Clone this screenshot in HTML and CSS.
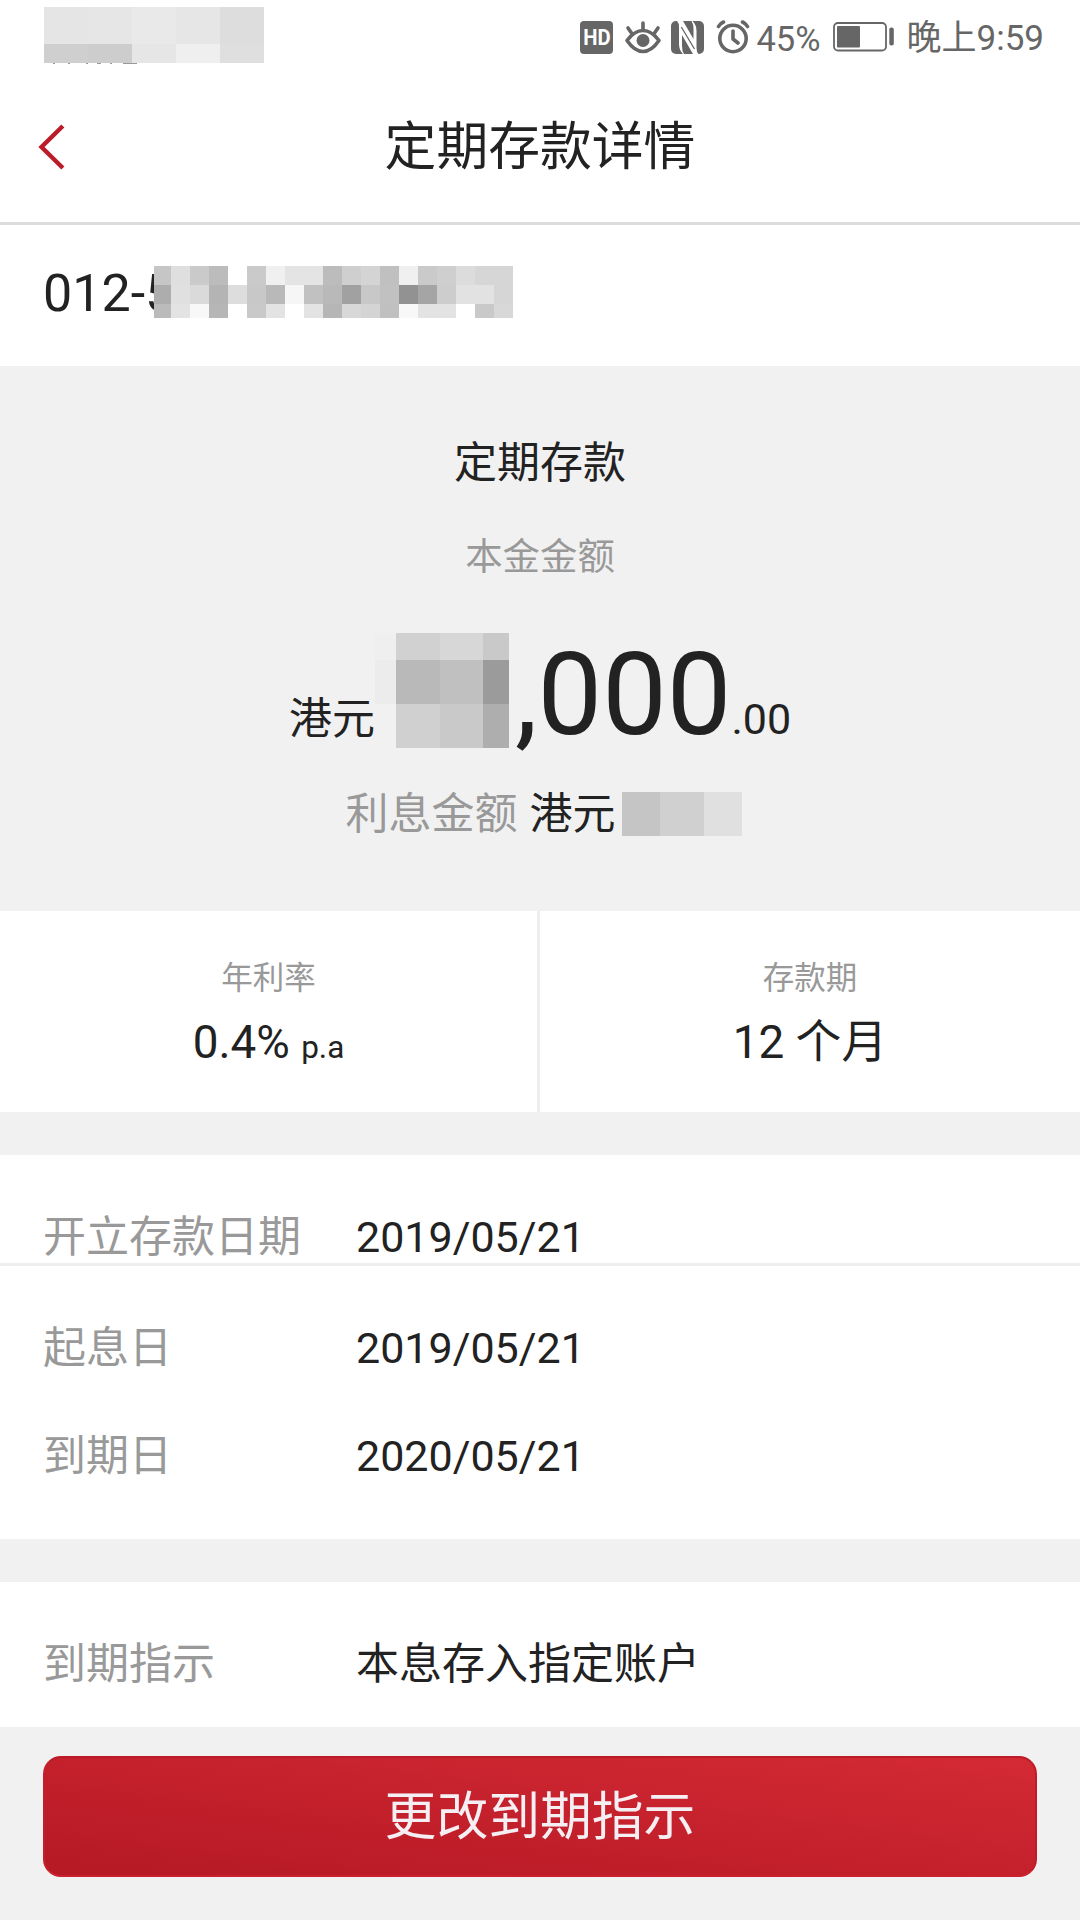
FILE: index.html
```html
<!DOCTYPE html>
<html lang="zh-CN">
<head>
<meta charset="utf-8">
<title>定期存款详情</title>
<link rel="stylesheet" href="styles.css">
</head>
<body>
<header class="header">
  <div class="status">
    <svg class="carrier" width="220" height="58" shape-rendering="crispEdges">
      <path fill="#e5e5e5" d="M0 0h44v37H0z"/><path fill="#e6e6e6" d="M44 0h44v37H44zM132 0h44v37h-44z"/><path fill="#e9e9e9" d="M88 0h44v37H88z"/><path fill="#ddd" d="M176 0h44v37h-44z"/>
      <path fill="#cfcfcf" d="M0 37h44v19H0z"/><path fill="#cdcdcd" d="M44 37h44v19H44z"/><path fill="#e6e6e6" d="M88 37h44v19H88z"/><path fill="#efefef" d="M132 37h44v19h-44z"/><path fill="#dfdfdf" d="M176 37h44v19h-44z"/>
      <path fill="#999" d="M9 56h2v1H9zM24 56h2v1h-2zM42 56h2v1h-2zM53 56h4v1h-4zM66 56h2v1h-2zM79 56h14v1H79z"/>
    </svg>
    <div class="tray">
      <span class="hd"><span class="hd-text">HD</span></span>
      <svg class="eye" width="38" height="36" viewBox="0 0 38 36" fill="none" stroke="#666" stroke-width="3.6" stroke-linecap="round">
        <path d="M3 21.500Q10.500 11.500 19 11.500T35 21.500Q27.500 32.500 19 32.500T3 21.500Z" stroke-linejoin="round"/>
        <circle cx="19" cy="21.500" r="6.500" fill="#666" stroke="none"/>
        <path d="M19 4v6M4 9l3.500 5M34 9l-3.500 5"/>
      </svg>
      <svg class="nfc" width="33" height="33" viewBox="0 0 33 33">
        <rect width="33" height="33" rx="5" fill="#666"/>
        <path d="M12 33Q8 29 8 23V6Q8 2 6 0H12L22.500 18V8Q22.500 3 20.500 0H21.500Q25.500 4 25.500 10V27Q25.500 31 27.500 33H22L11 14V25Q11 30 13 33Z" fill="#fff"/>
        <path d="M10.300 6L23.500 28" fill="none" stroke="#666" stroke-width="1.300"/>
      </svg>
      <svg class="alarm" width="34" height="34" viewBox="0 0 34 34" fill="none" stroke="#666" stroke-width="3.600" stroke-linecap="round">
        <circle cx="17" cy="18.500" r="13.200"/>
        <path d="M17 11v8l5 4M2.500 6.500Q4 3.500 7.500 2M26.500 2Q30 3.500 31.500 6.500" stroke-linejoin="round"/>
      </svg>
      <span class="percent">45%</span>
      <svg class="battery" width="62" height="30" viewBox="0 0 62 30">
        <rect x="1" y="1" width="52" height="27.500" rx="4" fill="none" stroke="#666" stroke-width="1.800"/>
        <rect x="4" y="4" width="23" height="21.500" rx="1" fill="#666"/>
        <rect x="56.300" y="5.500" width="4.500" height="18" rx="2" fill="#666"/>
      </svg>
      <span class="clock">晚上9:59</span>
    </div>
  </div>
  <div class="nav">
    <svg class="back" width="28" height="48" viewBox="0 0 28 48" fill="none" stroke="#bb1c29" stroke-width="4.400" stroke-linecap="square">
      <path d="M23.300 4.500L3.500 24L23.300 43.500"/>
    </svg>
    <h1 class="title">定期存款详情</h1>
  </div>
</header>

<section class="account">
  <span class="number">012-5</span>
  <svg class="account-mask" width="359" height="52" shape-rendering="crispEdges">
    <path fill="#fff" d="M0 0h359v52H0z"/>
    <g stroke-width="19">
      <path stroke="#c6c6c6" d="M0 9.500h17"/><path stroke="#dfdfdf" d="M17 9.500h19"/><path stroke="#cacaca" d="M36 9.500h19M93 9.500h19M264 9.500h19"/><path stroke="#bcbcbc" d="M55 9.500h19M169 9.500h19"/><path stroke="#f0f0f0" d="M112 9.500h19M245 9.500h19"/><path stroke="#e4e4e4" d="M131 9.500h38"/><path stroke="#cfcfcf" d="M188 9.500h19M283 9.500h19"/><path stroke="#d4d4d4" d="M207 9.500h19"/><path stroke="#c0c0c0" d="M226 9.500h19"/><path stroke="#dcdcdc" d="M302 9.500h19"/><path stroke="#d6d6d6" d="M321 9.500h38"/>
      <path stroke="#adadad" d="M0 28.500h17"/><path stroke="#e0e0e0" d="M17 28.500h19"/><path stroke="#dadada" d="M36 28.500h19"/><path stroke="#b4b4b4" d="M55 28.500h19"/><path stroke="#ddd" d="M74 28.500h19"/><path stroke="#c8c8c8" d="M93 28.500h19M207 28.500h19"/><path stroke="#b9b9b9" d="M112 28.500h19M169 28.500h19"/><path stroke="#f6f6f6" d="M131 28.500h19"/><path stroke="#c1c1c1" d="M150 28.500h19M226 28.500h19"/><path stroke="#a1a1a1" d="M188 28.500h19"/><path stroke="#929292" d="M245 28.500h19"/><path stroke="#a5a5a5" d="M264 28.500h19"/><path stroke="#cdcdcd" d="M283 28.500h19"/><path stroke="#e2e2e2" d="M302 28.500h38"/><path stroke="#d6d6d6" d="M340 28.500h19"/>
    </g>
    <g stroke-width="14">
      <path stroke="#bbb" d="M0 45h17"/><path stroke="#e3e3e3" d="M17 45h19M112 45h19M150 45h19M264 45h38"/><path stroke="#f8f8f8" d="M36 45h19M245 45h19"/><path stroke="#b6b6b6" d="M55 45h19M169 45h19"/><path stroke="#c9c9c9" d="M93 45h19M321 45h19"/><path stroke="#d8d8d8" d="M188 45h19M340 45h19"/><path stroke="#d4d4d4" d="M207 45h19"/><path stroke="#c0c0c0" d="M226 45h19"/>
    </g>
  </svg>
</section>

<section class="summary">
  <h2 class="product">定期存款</h2>
  <div class="principal-label">本金金额</div>
  <div class="principal">
    <span class="currency">港元</span>
    <svg class="principal-mask" width="134" height="115" shape-rendering="crispEdges">
      <path fill="#efefef" d="M0 0h21v27H0z"/><path fill="#ececec" d="M0 27h21v44H0z"/>
      <path fill="#d1d1d1" d="M21 0h44v27H21z"/><path fill="#d7d7d7" d="M65 0h43v27H65z"/><path fill="#c9c9c9" d="M108 0h26v27h-26z"/>
      <path fill="#b9b9b9" d="M21 27h44v44H21z"/><path fill="#c0c0c0" d="M65 27h43v44H65z"/><path fill="#9b9b9b" d="M108 27h26v44h-26z"/>
      <path fill="#d0d0d0" d="M21 71h44v44H21z"/><path fill="#c9c9c9" d="M65 71h43v44H65z"/><path fill="#aeaeae" d="M108 71h26v44h-26z"/>
    </svg>
    <span class="whole">,000</span><span class="cents">.00</span>
  </div>
  <div class="interest">
    <span class="muted">利息金额</span>
    <span class="interest-currency">港元</span>
    <svg class="interest-mask" width="120" height="44" shape-rendering="crispEdges">
      <path fill="#c5c5c5" d="M0 0h38v44H0z"/><path fill="#d0d0d0" d="M38 0h44v44H38z"/><path fill="#e0e0e0" d="M82 0h38v44H82z"/>
    </svg>
  </div>
</section>

<section class="stats">
  <div class="stat">
    <div class="stat-label">年利率</div>
    <div class="stat-value">0.4% <small class="unit">p.a</small></div>
  </div>
  <div class="stat">
    <div class="stat-label">存款期</div>
    <div class="stat-value">12 个月</div>
  </div>
</section>

<section class="dates">
  <div class="row opened"><span class="muted">开立存款日期</span><span>2019/05/21</span></div>
  <div class="row"><span class="muted">起息日</span><span>2019/05/21</span></div>
  <div class="row"><span class="muted">到期日</span><span>2020/05/21</span></div>
</section>

<section class="instruction">
  <div class="row"><span class="muted">到期指示</span><span>本息存入指定账户</span></div>
</section>

<footer class="footer">
  <button class="action" type="button">更改到期指示</button>
</footer>
</body>
</html>
```
FILE: styles.css
```css
* { box-sizing: border-box; }

body {
  margin: 0;
  width: 1080px;
  height: 1920px;
  overflow: hidden;
  background: #f1f1f1;
  color: #222;
  font-family: Roboto, "Noto Sans CJK SC", sans-serif;
  font-size: 43px;
}

svg { display: block; flex: none; }
h1, h2 { margin: 0; font-weight: 400; }
.muted { color: #999; }

/* Status bar and navigation */
.header {
  height: 225px;
  background: #fff;
  border-bottom: 3px solid #dcdcdc;
}
.status {
  display: flex;
  justify-content: space-between;
  height: 74px;
  padding: 0 36px 0 44px;
}
.carrier { margin-top: 7px; }
.tray {
  display: flex;
  align-items: center;
  height: 74px;
  color: #666;
  font-size: 34.5px;
  line-height: 70px;
  white-space: nowrap;
}
.hd {
  display: flex;
  justify-content: center;
  width: 33px;
  height: 33px;
  border-radius: 4px;
  background: #666;
  color: #fff;
  font-family: Roboto, sans-serif;
  font-size: 22px;
  font-weight: 700;
  line-height: 34px;
}
.hd-text { transform: scaleX(.92); }
.eye { margin: 0 9px 0 11px; }
.nfc { margin-right: 12px; }
.alarm { margin-right: 6px; }
.battery { margin: 0 12px 0 12px; }
.percent { padding-top: 3px; }
.clock { padding-top: 3px; font-size: 35px; }
.nav {
  display: grid;
  grid-template-columns: 100px 1fr 100px;
  align-items: center;
  height: 146px;
}
.back { margin-left: 38px; }
.title {
  padding-top: 2px;
  text-align: center;
  font-size: 51.8px;
  line-height: 144px;
}

.account {
  display: flex;
  align-items: center;
  height: 141px;
  padding: 0 43px 5px;
  background: #fff;
  font-size: 52px;
  line-height: 60px;
}
.number { padding-top: 2px; }
.account-mask { margin: 0 0 2px -20px; }

/* Principal and interest */
.summary {
  display: flex;
  flex-direction: column;
  align-items: center;
  height: 545px;
  padding-top: 62px;
}
.product { font-size: 43px; line-height: 70px; }
.principal-label {
  margin-top: 29px;
  color: #999;
  font-size: 37.4px;
  line-height: 60px;
}
.principal {
  display: flex;
  align-items: flex-end;
  height: 163px;
  margin-bottom: 34px;
  line-height: 60px;
}
.currency, .cents { padding-bottom: 1px; }
.principal-mask { margin: 0 6px 2px 0; }
.whole {
  font-size: 115px;
  line-height: 110px;
}
.interest {
  display: flex;
  align-items: center;
  height: 60px;
  padding-left: 7px;
  line-height: 60px;
}
.interest-currency { margin: 0 6px 0 12px; }

.stats {
  display: grid;
  grid-template-columns: 1fr 1fr;
  height: 201px;
  background: #fff;
}
.stat {
  padding-top: 43px;
  text-align: center;
}
.stat:first-child { border-right: 3px solid #eee; }
.stat-label {
  color: #999;
  font-size: 31.5px;
  line-height: 50px;
}
.stat-value {
  margin-top: 9px;
  font-size: 45.8px;
  line-height: 60px;
}
.unit { font-size: 31.5px; }

/* Label and value rows */
.dates {
  height: 384px;
  margin-top: 43px;
  background: #fff;
}
.row {
  display: grid;
  grid-template-columns: 313px 1fr;
  height: 108px;
  padding: 52px 0 0 43px;
  line-height: 60px;
}
.opened {
  height: 111px;
  border-bottom: 3px solid #eee;
}

.instruction {
  height: 145px;
  margin-top: 43px;
  background: #fff;
}

.footer { padding: 29px 43px 43px; }
.action {
  display: block;
  width: 994px;
  height: 121px;
  padding: 2px 0 0;
  border: 2px solid;
  border-color: #bd1b27 #c11b28 #cb202d #c11f2c;
  border-radius: 18px;
  background: linear-gradient(to top right, #b51924, #c4212c 50%, #d42a35) border-box;
  color: #f5eef2;
  font-family: inherit;
  font-size: 51.8px;
  line-height: 115px;
}
```
